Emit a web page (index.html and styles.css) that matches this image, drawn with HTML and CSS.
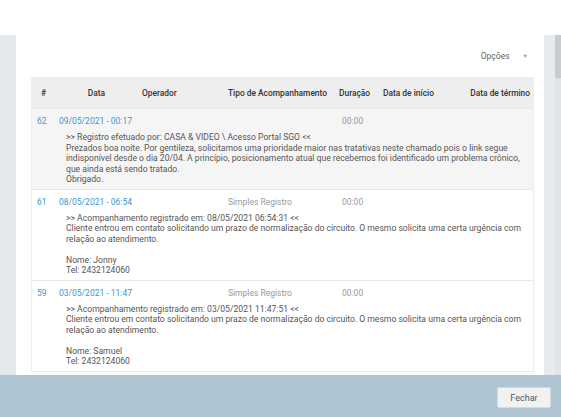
FILE: index.html
```html
<!DOCTYPE html>
<html lang="pt-BR">
<head>
<meta charset="utf-8">
<title>Acompanhamentos</title>
<link rel="stylesheet" href="styles.css">
</head>
<body>
<div class="modal">
  <div class="modal-top"></div>
  <div class="modal-body">
    <div class="gutter"></div>
    <div class="panel">
      <div class="toolbar">
        <span class="opcoes">Opções</span>
        <span class="caret">▼</span>
      </div>
      <div class="table">
        <div class="thead">
          <div class="c c-num center">#</div>
          <div class="c c-date center">Data</div>
          <div class="c">Operador</div>
          <div class="c">Tipo de Acompanhamento</div>
          <div class="c">Duração</div>
          <div class="c">Data de início</div>
          <div class="c right">Data de término</div>
        </div>

        <div class="row alt">
          <div class="cells">
            <div class="c c-num link">62</div>
            <div class="c c-date link">09/05/2021 - 00:17</div>
            <div class="c"></div>
            <div class="c muted"></div>
            <div class="c c-dur muted">00:00</div>
            <div class="c"></div>
            <div class="c"></div>
          </div>
          <div class="detail">&gt;&gt; Registro efetuado por: CASA &amp; VIDEO \ Acesso Portal SGO &lt;&lt;
Prezados boa noite. Por gentileza, solicitamos uma prioridade maior nas tratativas neste chamado pois o link segue indisponível desde o dia 20/04. A princípio, posicionamento atual que recebemos foi identificado um problema crônico, que ainda está sendo tratado.
Obrigado.</div>
        </div>

        <div class="row">
          <div class="cells">
            <div class="c c-num link">61</div>
            <div class="c c-date link">08/05/2021 - 06:54</div>
            <div class="c"></div>
            <div class="c muted">Simples Registro</div>
            <div class="c c-dur muted">00:00</div>
            <div class="c"></div>
            <div class="c"></div>
          </div>
          <div class="detail">&gt;&gt; Acompanhamento registrado em: 08/05/2021 06:54:31 &lt;&lt;
Cliente entrou em contato solicitando um prazo de normalização do circuito. O mesmo solicita uma certa urgência com relação ao atendimento.

Nome: Jonny
Tel: 2432124060</div>
        </div>

        <div class="row">
          <div class="cells">
            <div class="c c-num link">59</div>
            <div class="c c-date link">03/05/2021 - 11:47</div>
            <div class="c"></div>
            <div class="c muted">Simples Registro</div>
            <div class="c c-dur muted">00:00</div>
            <div class="c"></div>
            <div class="c"></div>
          </div>
          <div class="detail">&gt;&gt; Acompanhamento registrado em: 03/05/2021 11:47:51 &lt;&lt;
Cliente entrou em contato solicitando um prazo de normalização do circuito. O mesmo solicita uma certa urgência com relação ao atendimento.

Nome: Samuel
Tel: 2432124060</div>
        </div>
      </div>
    </div>
    <div class="rail">
      <div class="scrollbar"><div class="thumb"></div></div>
    </div>
  </div>
  <div class="footer">
    <button class="btn">Fechar</button>
  </div>
</div>
</body>
</html>
```

FILE: styles.css
```css
* { box-sizing: border-box; }
html, body {
  margin: 0;
  padding: 0;
  background: #ffffff;
}
body {
  font-family: Roboto, "Liberation Sans", sans-serif;
  color: #555;
  width: 561px;
  height: 417px;
  overflow: hidden;
}
.modal {
  display: flex;
  flex-direction: column;
  height: 417px;
}
.modal-top {
  height: 35px;
  background: #ffffff;
  flex: none;
}
.modal-body {
  height: 340px;
  flex: none;
  display: flex;
  background: #e4e9ec;
  overflow: hidden;
}
.gutter {
  width: 16px;
  flex: none;
}
.panel {
  width: 528px;
  flex: none;
  background: #ffffff;
  padding: 14px 10px 0 15px;
  overflow: hidden;
}
.rail {
  flex: 1;
  display: flex;
  justify-content: flex-end;
  background: #e8ebee;
}
.scrollbar {
  width: 6px;
  background: #e1e5e8;
}
.thumb {
  height: 43px;
  background: #c8ccd0;
}
.toolbar {
  height: 14px;
  margin-bottom: 14px;
  display: flex;
  justify-content: flex-end;
  align-items: center;
  gap: 13px;
  padding-right: 6px;
  font-size: 8.5px;
  color: #666;
}
.caret {
  font-size: 5.5px;
  color: #999;
}
.table {
  border: 1px solid #ececec;
  border-top: none;
}
.thead, .cells {
  display: grid;
  grid-template-columns: 23px 83px 86px 111px 44px 61px 1fr;
}
.thead {
  height: 31px;
  align-items: center;
  background: #eeeeee;
  font-size: 8.4px;
  font-weight: 500;
  color: #333;
  margin: 0 -1px;
  padding: 0 1px;
}
.c {
  padding-left: 4px;
  white-space: nowrap;
}
.thead .center { text-align: center; padding-left: 0; }
.thead .right { text-align: right; padding-right: 3px; }
.row {
  border-top: 1px solid #e8e8e8;
  padding: 6px 0 4px;
  background: #ffffff;
}
.row.alt { background: #f5f5f5; }
.cells {
  font-size: 8.5px;
  line-height: 12px;
}
.cells .c-num { padding-left: 5px; }
.cells .c-dur { padding-left: 7px; }
.link { color: #3a98d0; }
.muted { color: #999; }
.detail {
  margin-top: 5px;
  padding-left: 34px;
  width: 496px;
  font-size: 8.6px;
  line-height: 10.5px;
  white-space: pre-line;
  color: #555;
}
.footer {
  flex: 1;
  background: #aec5d1;
  display: flex;
  justify-content: flex-end;
  align-items: flex-start;
  padding: 12px 10px 0 0;
}
.btn {
  width: 54px;
  height: 21px;
  background: #f1f1f1;
  border: 1px solid #d5dadd;
  border-radius: 2px;
  font-family: Roboto, "Liberation Sans", sans-serif;
  font-size: 9px;
  color: #555;
  padding: 0;
}
```
